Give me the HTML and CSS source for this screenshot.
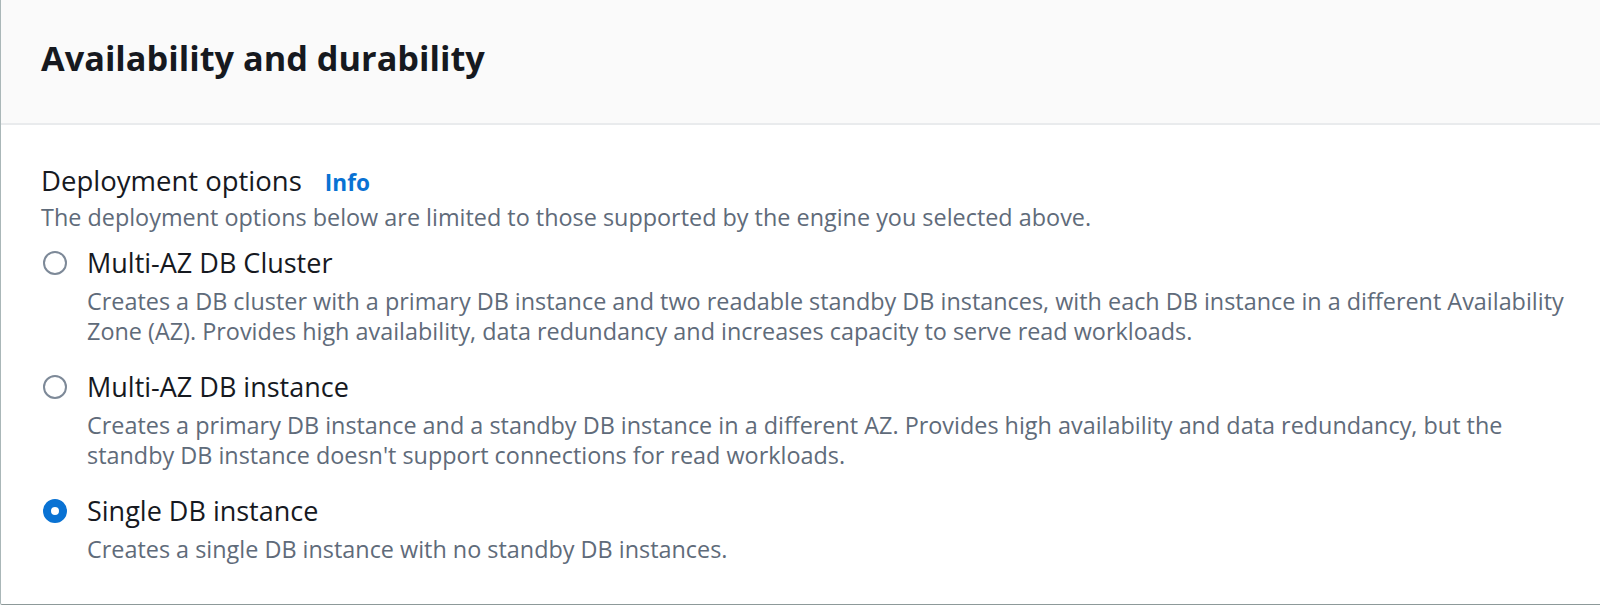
FILE: index.html
```html
<!DOCTYPE html>
<html>
<head>
<meta charset="utf-8">
<link rel="stylesheet" href="styles.css">
</head>
<body>
<div class="container">
  <div class="header">
    <h2 class="title">Availability and durability</h2>
  </div>
  <div class="content">
    <div class="label-row">
      <span class="label">Deployment options</span>
      <a class="info">Info</a>
    </div>
    <div class="hint">The deployment options below are limited to those supported by the engine you selected above.</div>
    <div class="options">
      <div class="option">
        <span class="radio"></span>
        <div class="option-text">
          <div class="option-label">Multi-AZ DB Cluster</div>
          <div class="option-desc">Creates a DB cluster with a primary DB instance and two readable standby DB instances, with each DB instance in a different Availability Zone (AZ). Provides high availability, data redundancy and increases capacity to serve read workloads.</div>
        </div>
      </div>
      <div class="option">
        <span class="radio"></span>
        <div class="option-text">
          <div class="option-label">Multi-AZ DB instance</div>
          <div class="option-desc">Creates a primary DB instance and a standby DB instance in a different AZ. Provides high availability and data redundancy, but the standby DB instance doesn't support connections for read workloads.</div>
        </div>
      </div>
      <div class="option">
        <span class="radio checked"></span>
        <div class="option-text">
          <div class="option-label">Single DB instance</div>
          <div class="option-desc">Creates a single DB instance with no standby DB instances.</div>
        </div>
      </div>
    </div>
  </div>
</div>
</body>
</html>
```
FILE: styles.css
```css
html, body {
  margin: 0;
  padding: 0;
  background: #ffffff;
}
body {
  font-family: "Open Sans", "Noto Sans", sans-serif;
  color: #16191f;
  width: 1600px;
  height: 606px;
  overflow: hidden;
}
.container {
  width: 1640px;
  height: 605px;
  border-left: 1px solid #aab7b8;
  border-bottom: 1px solid #8d9999;
  border-bottom-left-radius: 2px;
  box-sizing: border-box;
}
.header {
  height: 125px;
  background: #fafafa;
  border-bottom: 2px solid #e9ebed;
  box-sizing: border-box;
  display: flex;
  align-items: center;
  padding-left: 40px;
  padding-bottom: 8px;
}
.title {
  margin: 0;
  font-size: 34.3px;
  font-weight: 700;
  color: #16191f;
}
.content {
  padding: 40px 0 0 40px;
}
.label-row {
  display: flex;
  align-items: baseline;
  gap: 23px;
  height: 32px;
  line-height: 32px;
}
.label {
  font-size: 27.5px;
  color: #16191f;
}
.info {
  font-size: 22.6px;
  font-weight: 700;
  color: #0972d3;
}
.hint {
  font-size: 23.4px;
  line-height: 30px;
  color: #5f6b7a;
  margin-top: 5px;
}
.options {
  display: flex;
  flex-direction: column;
  gap: 25px;
  margin-top: 15px;
}
.option {
  display: flex;
  align-items: flex-start;
  gap: 20px;
}
.radio {
  flex: none;
  width: 24px;
  height: 24px;
  border: 2px solid #7d8998;
  border-radius: 50%;
  box-sizing: border-box;
  margin-top: 4px;
  margin-left: 2px;
}
.radio.checked {
  border: 8px solid #0972d3;
  background: #ffffff;
}
.option-label {
  font-size: 27px;
  line-height: 32px;
  color: #16191f;
}
.option-desc {
  font-size: 23.4px;
  line-height: 30px;
  color: #5f6b7a;
  margin-top: 7px;
  max-width: 1482px;
}
```
